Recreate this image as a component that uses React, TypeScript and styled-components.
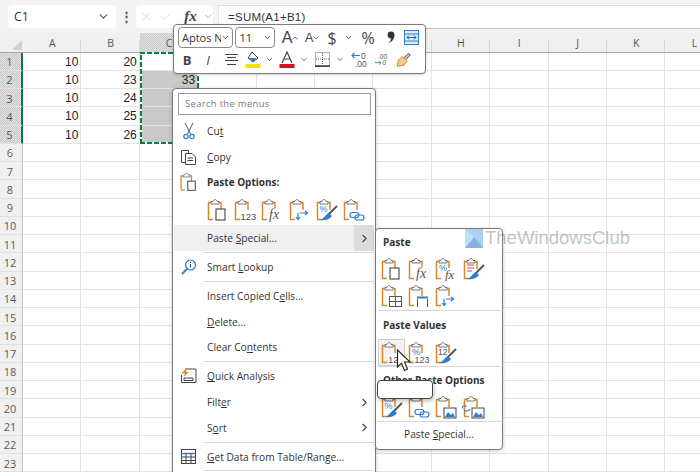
import React from "react";
import styled, { createGlobalStyle } from "styled-components";
import { ChevronDown, ChevronRight, X, Check } from "lucide-react";

const Global = createGlobalStyle`
  html, body { margin: 0; padding: 0; width: 700px; height: 472px; overflow: hidden; background: #fff; }
  #root { width: 700px; height: 472px; overflow: hidden; }
  * { box-sizing: border-box; }
`;

const UI = `"Open Sans", "Noto Sans", sans-serif`;
const hatch = `repeating-conic-gradient(#c9c9c9 0 25%, #e2e2e2 0 50%) 0 0/2px 2px`;

const Page = styled.div`
  position: relative;
  width: 700px;
  height: 472px;
  overflow: hidden;
  background: #fff;
  font-family: ${UI};
`;

const FormulaBar = styled.div`
  display: flex;
  align-items: flex-start;
  height: 33px;
  padding-top: 5px;
  background: #f3f3f3;
`;
const NameBox = styled.div`
  display: flex;
  align-items: center;
  justify-content: space-between;
  width: 108px;
  height: 23px;
  margin-left: 8px;
  padding: 0 6px;
  background: #fff;
  border-radius: 4px;
  font-size: 12.5px;
  color: #333;
`;
const Dots = styled.div`
  width: 20px;
  text-align: center;
  font: bold 13px/23px ${UI};
  color: #555;
`;
const FxBox = styled.div`
  display: flex;
  align-items: center;
  gap: 6px;
  width: 77px;
  height: 23px;
  padding-left: 3px;
  background: #fff;
  border-radius: 4px;
  color: #c8c8c8;
`;
const FxText = styled.span`
  margin-left: 5px;
  font: italic bold 15px "Liberation Serif", serif;
  color: #444;
`;
const FormulaInput = styled.div`
  flex: 1;
  height: 24px;
  margin-left: 5px;
  padding: 0 9px;
  background: #fff;
  border-top: 1px solid #dcdcdc;
  border-left: 1px solid #e4e4e4;
  border-bottom: 1px solid #bdbdbd;
  font: 11.5px/22px "Liberation Sans", sans-serif;
  letter-spacing: 0.25px;
  color: #333;
`;

const Sheet = styled.div`
  display: grid;
  grid-template-columns: 23px repeat(12, 58.4px);
  grid-template-rows: 19.5px repeat(24, 18.25px);
`;
const Corner = styled.div`
  position: relative;
  background: #f0f0f0;
  border-bottom: 1px solid #a6a6a6;
  &::after {
    content: "";
    position: absolute;
    right: 1px;
    bottom: 2px;
    border-style: solid;
    border-width: 0 0 10px 10px;
    border-color: transparent transparent #d2d2d2 transparent;
  }
`;
const ColHead = styled.div<{ $sel?: boolean }>`
  position: relative;
  display: flex;
  justify-content: center;
  align-items: center;
  padding-top: 2px;
  background: ${(p) => (p.$sel ? hatch : "#f0f0f0")};
  border-bottom: 1px solid #a6a6a6;
  font-size: 10.5px;
  color: #555;
  &::after {
    content: "";
    position: absolute;
    right: 0;
    bottom: 0;
    width: 1px;
    height: 12px;
    background: #d6d6d6;
  }
`;
const RowHead = styled.div<{ $sel?: boolean }>`
  display: flex;
  justify-content: center;
  align-items: center;
  padding: 1px 2px 0 0;
  background: ${(p) => (p.$sel ? hatch : "#f0f0f0")};
  border-bottom: 1px solid #e0e0e0;
  border-right: ${(p) => (p.$sel ? "2px solid #107c41" : "1px solid #c6c6c6")};
  font-size: 11px;
  color: ${(p) => (p.$sel ? "#2f6b55" : "#5b5b5b")};
`;
const Cell = styled.div<{ $fill?: boolean }>`
  display: flex;
  align-items: center;
  justify-content: flex-end;
  padding: 1px 2px 0 0;
  background: ${(p) => (p.$fill ? "#c9c9c9" : "#fff")};
  border-right: 1px solid #e4e4e4;
  border-bottom: 1px solid #e4e4e4;
  font: 12px "Liberation Sans", sans-serif;
  color: #222;
`;

const Ants = styled.div`
  position: absolute;
  left: 140px;
  top: 52px;
  width: 59px;
  height: 92px;
  background:
    repeating-linear-gradient(90deg, #107c41 0 5px, #fff 5px 7px) top / 100% 2px no-repeat,
    repeating-linear-gradient(90deg, #107c41 0 5px, #fff 5px 7px) bottom / 100% 2px no-repeat,
    repeating-linear-gradient(0deg, #107c41 0 5px, #fff 5px 7px) left / 2px 100% no-repeat,
    repeating-linear-gradient(0deg, #107c41 0 5px, #fff 5px 7px) right / 2px 100% no-repeat;
  pointer-events: none;
`;

const MiniBar = styled.div`
  position: absolute;
  left: 173px;
  top: 24px;
  width: 253px;
  height: 50px;
  padding: 2px 0 0 4px;
  background: #fff;
  border: 1px solid #7a7a7a;
  border-radius: 4px;
  box-shadow: 0 1px 3px rgba(0, 0, 0, 0.18);
`;
const ToolRow = styled.div`
  display: flex;
  align-items: center;
  height: 21px;
  & + & {
    margin-top: 1px;
  }
`;
const Select = styled.div<{ $w: number }>`
  display: flex;
  align-items: center;
  justify-content: space-between;
  width: ${(p) => p.$w}px;
  height: 21px;
  margin-right: 2px;
  padding: 0 2px 0 3px;
  border: 1px solid #8a8a8a;
  border-radius: 4px;
  font-size: 11px;
  color: #333;
  white-space: nowrap;
  overflow: hidden;
`;
const SelectText = styled.span`
  overflow: hidden;
  flex: 1;
`;
const Tool = styled.div<{ $w: number }>`
  display: flex;
  align-items: center;
  justify-content: center;
  flex: none;
  width: ${(p) => p.$w}px;
  height: 21px;
  color: #444;
`;
const GrowA = styled.span<{ $s: number }>`
  font: ${(p) => p.$s}px "Liberation Sans", sans-serif;
  color: #444;
`;
const ToolGlyph = styled.span<{ $b?: boolean; $i?: boolean; $s?: number; $c?: string }>`
  font-family: ${UI};
  font-size: ${(p) => p.$s ?? 13}px;
  font-weight: ${(p) => (p.$b ? 700 : 400)};
  font-style: ${(p) => (p.$i ? "italic" : "normal")};
  color: ${(p) => p.$c ?? "#444"};
`;

const Menu = styled.div`
  position: absolute;
  left: 172px;
  top: 88px;
  width: 204px;
  height: 400px;
  padding: 4px 1px 0;
  background: #fff;
  border: 1px solid #7a7a7a;
  border-radius: 4px;
  box-shadow: 0 1px 4px rgba(0, 0, 0, 0.2);
`;
const Search = styled.div`
  height: 22px;
  margin: 0 3px 3px 4px;
  padding-left: 6px;
  border: 1px solid #9a9a9a;
  font-size: 9.5px;
  line-height: 19px;
  letter-spacing: 0.3px;
  color: #7a7a7a;
`;
const Item = styled.div<{ $hover?: boolean }>`
  display: flex;
  align-items: center;
  height: 25.8px;
  background: ${(p) => (p.$hover ? "#f0f0f0" : "transparent")};
  font-size: 10.2px;
  color: #333;
  white-space: nowrap;
`;
const ItemIcon = styled.div`
  display: flex;
  align-items: center;
  justify-content: center;
  flex: none;
  width: 33px;
  padding-right: 4px;
`;
const ItemLabel = styled.div`
  flex: 1;
`;
const Heading = styled.div`
  flex: 1;
  font-weight: 700;
  font-size: 10px;
  color: #333;
`;
const Arrow = styled.div<{ $active?: boolean }>`
  display: flex;
  align-items: center;
  justify-content: center;
  width: 20px;
  height: 100%;
  background: ${(p) => (p.$active ? "#dcdcdc" : "transparent")};
  color: #444;
`;
const IconRow = styled.div<{ $pad: number; $h: number }>`
  display: flex;
  align-items: center;
  height: ${(p) => p.$h}px;
  padding-left: ${(p) => p.$pad}px;
`;
const IconCell = styled.div<{ $hover?: boolean }>`
  display: flex;
  align-items: center;
  justify-content: center;
  flex: none;
  width: 27.3px;
  height: 27px;
  background: ${(p) => (p.$hover ? "#f2f2f2" : "transparent")};
  outline: ${(p) => (p.$hover ? "1px solid #cfcfcf" : "none")};
  outline-offset: -1px;
`;
const Sep = styled.div<{ $left: number; $gap?: number }>`
  height: 1px;
  margin: ${(p) => p.$gap ?? 0}px 0 ${(p) => p.$gap ?? 0}px ${(p) => p.$left}px;
  background: #d6d6d6;
`;

const Sub = styled.div`
  position: absolute;
  left: 375px;
  top: 228px;
  width: 128px;
  height: 222px;
  padding: 3px 1px 0;
  background: #fff;
  border: 1px solid #7a7a7a;
  border-radius: 4px;
  box-shadow: 0 1px 4px rgba(0, 0, 0, 0.2);
`;
const SubHead = styled.div<{ $h: number; $pb?: number }>`
  display: flex;
  align-items: center;
  height: ${(p) => p.$h}px;
  padding: 0 0 ${(p) => p.$pb ?? 0}px 6px;
  font-weight: 700;
  font-size: 10px;
  color: #333;
  white-space: nowrap;
`;
const SubFoot = styled.div`
  height: 26px;
  font-size: 10.2px;
  line-height: 25px;
  text-align: center;
  color: #333;
`;
const Tip = styled.div`
  position: absolute;
  left: 377px;
  top: 380px;
  width: 56px;
  height: 19px;
  background: #fff;
  border: 1px solid #444;
  border-radius: 4px;
  box-shadow: 1px 2px 4px rgba(0, 0, 0, 0.25);
`;
const Cursor = styled.svg`
  position: absolute;
  left: 396px;
  top: 349px;
`;
const Watermark = styled.div`
  position: absolute;
  left: 465px;
  top: 227px;
  display: flex;
  align-items: center;
  gap: 2px;
  font: 18.5px "Liberation Sans", sans-serif;
  color: rgba(95, 110, 125, 0.42);
  pointer-events: none;
`;

/* ---------- drawings ---------- */
const OR = "#d9872a";
const BL = "#2b7cd3";
const GR = "#666";

type V =
  | "page" | "n123" | "fx" | "transpose" | "brushPct" | "link" | "pctFx" | "brushLines"
  | "table" | "width" | "n12" | "pct123" | "brush12" | "pic" | "linkPic";

const Brush = () => (
  <g>
    <path d="M22 8 L13 17" stroke="#555" strokeWidth="2" />
    <path d="M14 15 L17 18 C14 22 9 23 5 22 C9 21 10 17 14 15Z" fill={BL} />
  </g>
);
const LinkMark = () => (
  <g fill="none" stroke={BL} strokeWidth="1.2">
    <rect x="8" y="14.5" width="9" height="5" rx="2.5" />
    <rect x="13" y="17" width="9" height="5" rx="2.5" />
  </g>
);
const PicMark = () => (
  <g>
    <rect x="10" y="13" width="12" height="10" fill="#fff" stroke="#444" />
    <path d="M11 22 L14 17 L17 20 L19 18 L21 22Z" fill={BL} />
  </g>
);
const Board = () => (
  <g fill="none">
    <path d="M7 21.5H2.5V4.5H15V12" stroke={OR} strokeWidth="1.5" />
    <path d="M5 6V3.5H7C7 1 11 1 11 3.5H13V6Z" fill="#fff" stroke={GR} strokeWidth="0.9" />
  </g>
);
const Small = styled.text<{ $s: number; $c?: string; $i?: boolean }>`
  font-family: ${(p) => (p.$i ? `"Liberation Serif", serif` : `"Liberation Sans", sans-serif`)};
  font-style: ${(p) => (p.$i ? "italic" : "normal")};
  font-size: ${(p) => p.$s}px;
  fill: ${(p) => p.$c ?? "#555"};
`;

const Clip = ({ v }: { v: V }) => (
  <svg width="24" height="24" viewBox="0 0 24 24">
    <Board />
    {v === "page" && <rect x="10" y="11" width="9" height="11" fill="#fff" stroke="#444" strokeWidth="1.1" />}
    {v === "n123" && (
      <g>
        <rect x="7" y="13" width="16" height="10" fill="#fff" />
        <Small x="7.5" y="22" $s={9.5}>123</Small>
      </g>
    )}
    {v === "n12" && (
      <g>
        <rect x="8" y="13" width="11" height="10" fill="#fff" />
        <Small x="8" y="22" $s={9.5}>12</Small>
      </g>
    )}
    {v === "fx" && (
      <g>
        <rect x="8" y="10" width="14" height="13" fill="#fff" />
        <Small x="9" y="21" $s={14} $i>fx</Small>
      </g>
    )}
    {v === "pctFx" && (
      <g>
        <rect x="9" y="11" width="14" height="12" fill="#fff" />
        <Small x="5" y="14" $s={9} $c={BL}>%</Small>
        <Small x="11" y="22" $s={13} $i>fx</Small>
      </g>
    )}
    {v === "transpose" && (
      <g fill="none" stroke={BL} strokeWidth="1.2">
        <rect x="8" y="12" width="15" height="11" fill="#fff" stroke="none" />
        <path d="M10 15V21M8 19L10 21.5L12 19M12 15H19M17 13L19.5 15L17 17" />
      </g>
    )}
    {v === "brushPct" && (
      <g>
        <Small x="4.5" y="14" $s={9} $c={BL}>%</Small>
        <Brush />
      </g>
    )}
    {v === "brushLines" && (
      <g>
        <path d="M5 8H12M5 11H12M5 14H10" stroke="#d0453a" strokeWidth="1" />
        <Brush />
      </g>
    )}
    {v === "brush12" && (
      <g>
        <Small x="4" y="14" $s={8.5}>12</Small>
        <Brush />
      </g>
    )}
    {v === "link" && (
      <g>
        <rect x="7" y="13" width="16" height="10" fill="#fff" />
        <LinkMark />
      </g>
    )}
    {v === "table" && (
      <g fill="#fff" stroke="#555" strokeWidth="1">
        <rect x="9.5" y="12.5" width="12" height="10" />
        <path d="M15.5 12.5V22.5M9.5 17.5H21.5" fill="none" />
      </g>
    )}
    {v === "width" && (
      <g>
        <rect x="9" y="12" width="14" height="11" fill="#fff" />
        <path d="M10.5 23V15M20.5 23V15" stroke="#555" />
        <path d="M10 13.5H21" stroke={BL} strokeWidth="2" />
      </g>
    )}
    {v === "pct123" && (
      <g>
        <rect x="7" y="14" width="16" height="9" fill="#fff" />
        <Small x="5" y="14" $s={9.5} $c={BL}>%</Small>
        <Small x="7.5" y="22" $s={9}>123</Small>
      </g>
    )}
    {v === "pic" && <PicMark />}
    {v === "linkPic" && (
      <g>
        <PicMark />
        <path d="M1 13.5C-1 11 3 10 4.5 11.5M2 15C4 17 7 16 8 14" fill="none" stroke={BL} strokeWidth="1.1" />
      </g>
    )}
  </svg>
);

const CutIcon = () => (
  <svg width="18" height="18" viewBox="0 0 18 18" fill="none">
    <path d="M5 1L10.5 12M13 1L7.5 12" stroke="#555" strokeWidth="1" />
    <circle cx="6" cy="14.5" r="2.2" stroke={BL} strokeWidth="1.2" />
    <circle cx="12" cy="14.5" r="2.2" stroke={BL} strokeWidth="1.2" />
  </svg>
);
const CopyIcon = () => (
  <svg width="18" height="18" viewBox="0 0 18 18" fill="none" stroke="#444" strokeWidth="1">
    <path d="M5 14.5H1.5V2.5H8.5V5" />
    <path d="M5.5 5.5H12L15.5 9V16.5H5.5Z" fill="#fff" />
    <path d="M7.5 10H13M7.5 12.5H13" />
  </svg>
);
const PasteIcon = () => (
  <svg width="20" height="20" viewBox="0 0 24 24">
    <Board />
    <rect x="10.5" y="11" width="9" height="11" fill="#fff" stroke="#444" strokeWidth="1.2" />
  </svg>
);
const LookupIcon = () => (
  <svg width="18" height="18" viewBox="0 0 18 18" fill="none" stroke={BL}>
    <circle cx="10.5" cy="7" r="5" strokeWidth="1.2" />
    <path d="M7 11L2 16" strokeWidth="1.8" />
    <path d="M10.5 6V9.5M10.5 4V5" stroke="#333" strokeWidth="1" />
  </svg>
);
const QuickIcon = () => (
  <svg width="18" height="18" viewBox="0 0 18 18" fill="none">
    <path d="M5 2H16V15.5H1.5V8" stroke="#444" />
    <path d="M4 11H13V13.5H4Z" stroke="#444" fill="#fff" />
    <path d="M6.5 1L1.5 6.5H5L3.5 10L9 5H6Z" fill="#e8832a" />
  </svg>
);
const TableIcon = () => (
  <svg width="17" height="17" viewBox="0 0 17 17" fill="none" stroke="#444">
    <rect x="1.5" y="1.5" width="14" height="14" />
    <path d="M1.5 5.5H15.5" stroke={BL} strokeWidth="1.4" />
    <path d="M1.5 9H15.5M1.5 12.5H15.5M6 5.5V15.5M11 5.5V15.5" />
  </svg>
);
const AlignIcon = () => (
  <svg width="15" height="13" viewBox="0 0 15 13" stroke="#444">
    <path d="M1 1.5H14M3 4.5H12M1 7.5H14M3 11.5H12" />
  </svg>
);
const FillIcon = () => (
  <svg width="16" height="17" viewBox="0 0 16 17">
    <path d="M7 1L13 7L8 11L3 7Z" fill="#fff" stroke="#444" />
    <path d="M3.5 7H12L8 10.5Z" fill={BL} />
    <rect x="0.5" y="13" width="15" height="4" fill="#f6e100" />
  </svg>
);
const ColorA = () => (
  <svg width="16" height="17" viewBox="0 0 16 17">
    <path d="M3 12L8 1L13 12M5 8H11" fill="none" stroke="#444" strokeWidth="1.2" />
    <rect x="0.5" y="13" width="15" height="4" fill="#d6121f" />
  </svg>
);
const BordersIcon = () => (
  <svg width="15" height="15" viewBox="0 0 15 15" fill="none" stroke="#666" strokeDasharray="1 1">
    <rect x="0.5" y="0.5" width="14" height="13" />
    <path d="M7.5 1V13M1 7H14" />
    <path d="M0 14.2H15" stroke="#222" strokeDasharray="none" strokeWidth="1.3" />
  </svg>
);
const WrapIcon = () => (
  <svg width="15" height="15" viewBox="0 0 15 15" fill="#dcebf7" stroke={BL}>
    <rect x="0.5" y="0.5" width="14" height="14" />
    <path d="M1 4H14M1 11H14" fill="none" />
    <path d="M3 7.5H12M5 5.5L3 7.5L5 9.5M10 5.5L12 7.5L10 9.5" fill="none" stroke="#1e6aa8" />
  </svg>
);
const CommaIcon = () => (
  <svg width="9" height="13" viewBox="0 0 9 13">
    <circle cx="5" cy="4" r="3.4" fill="#333" />
    <path d="M8.4 4C8.4 8 6 11 2 12.5C4.5 10.5 5.5 8 5 6Z" fill="#333" />
  </svg>
);
const DecInc = () => (
  <svg width="18" height="17" viewBox="0 0 18 17">
    <path d="M10 4.5H2M4.5 2L2 4.5L4.5 7" fill="none" stroke={BL} strokeWidth="1.1" />
    <Small x="11" y="8" $s={8.5}>0</Small>
    <Small x="5" y="16" $s={8.5}>.00</Small>
  </svg>
);
const DecDec = () => (
  <svg width="18" height="17" viewBox="0 0 18 17">
    <Small x="5" y="8" $s={8.5}>.00</Small>
    <path d="M1 12.5H9M6.5 10L9 12.5L6.5 15" fill="none" stroke={BL} strokeWidth="1.1" />
    <Small x="11" y="16" $s={8.5}>0</Small>
  </svg>
);
const PainterIcon = () => (
  <svg width="17" height="17" viewBox="0 0 17 17" fill="none">
    <path d="M9 7L13.5 2.5L15 4L10.5 8.5" stroke="#777" strokeWidth="1.2" />
    <path d="M7 5.5L12 10.5L9 14L2 15.5L3.5 9Z" fill="#f7c98d" stroke="#d9872a" />
  </svg>
);

const Grow = ({ up }: { up?: boolean }) => (
  <svg width="6" height="4" viewBox="0 0 6 4" fill="none" stroke={BL}>
    <path d={up ? "M0.5 3.5L3 1L5.5 3.5" : "M0.5 0.5L3 3L5.5 0.5"} />
  </svg>
);
const Tiny = () => <ChevronDown size={9} strokeWidth={2.4} color="#444" />;

const Wm = () => (
  <svg width="18" height="19" viewBox="0 0 18 19">
    <rect width="18" height="19" fill="#a9d1f2" />
    <path d="M0 19L9 8L18 19Z" fill="#8ab1dc" />
    <path d="M0 0L9 8L0 19Z" fill="#bfe0f7" />
  </svg>
);

/* ---------- data ---------- */
const COLS = "ABCDEFGHIJKL".split("");
const ROWS = Array.from({ length: 24 }, (_, i) => i + 1);
const DATA: Record<number, [number, number]> = {
  1: [10, 20], 2: [10, 23], 3: [10, 24], 4: [10, 25], 5: [10, 26],
};
const PASTE_OPTIONS: V[] = ["page", "n123", "fx", "transpose", "brushPct", "link"];

export default function App() {
  return (
    <Page>
      <Global />
      <FormulaBar>
        <NameBox>
          C1
          <ChevronDown size={13} color="#555" />
        </NameBox>
        <Dots>⋮</Dots>
        <FxBox>
          <X size={15} strokeWidth={1.2} />
          <Check size={15} strokeWidth={1.2} />
          <FxText>fx</FxText>
          <ChevronDown size={11} color="#aaa" />
        </FxBox>
        <FormulaInput>=SUM(A1+B1)</FormulaInput>
      </FormulaBar>

      <Sheet>
        <Corner />
        {COLS.map((c) => (
          <ColHead key={c} $sel={c === "C"}>{c}</ColHead>
        ))}
        {ROWS.map((r) => (
          <React.Fragment key={r}>
            <RowHead $sel={r <= 5}>{r < 24 ? r : ""}</RowHead>
            {COLS.map((c, i) => (
              <Cell key={c} $fill={c === "C" && r >= 2 && r <= 5}>
                {i < 2 && DATA[r] ? DATA[r][i] : c === "C" && r === 2 ? 33 : ""}
              </Cell>
            ))}
          </React.Fragment>
        ))}
      </Sheet>
      <Ants />

      <MiniBar>
        <ToolRow>
          <Select $w={56}>
            <SelectText>Aptos Narrow</SelectText>
            <Tiny />
          </Select>
          <Select $w={40}>
            <SelectText>11</SelectText>
            <Tiny />
          </Select>
          <Tool $w={26}><GrowA $s={16}>A</GrowA><Grow up /></Tool>
          <Tool $w={18}><GrowA $s={13}>A</GrowA><Grow /></Tool>
          <Tool $w={22}><ToolGlyph $s={16}>$</ToolGlyph></Tool>
          <Tool $w={10}><Tiny /></Tool>
          <Tool $w={30}><ToolGlyph $s={16}>%</ToolGlyph></Tool>
          <Tool $w={14}><CommaIcon /></Tool>
          <Tool $w={28}><WrapIcon /></Tool>
        </ToolRow>
        <ToolRow>
          <Tool $w={18}><ToolGlyph $b $s={13}>B</ToolGlyph></Tool>
          <Tool $w={24}><ToolGlyph $i $s={13}>I</ToolGlyph></Tool>
          <Tool $w={22}><AlignIcon /></Tool>
          <Tool $w={22}><FillIcon /></Tool>
          <Tool $w={10}><Tiny /></Tool>
          <Tool $w={26}><ColorA /></Tool>
          <Tool $w={8}><Tiny /></Tool>
          <Tool $w={28}><BordersIcon /></Tool>
          <Tool $w={8}><Tiny /></Tool>
          <Tool $w={30}><DecInc /></Tool>
          <Tool $w={14}><DecDec /></Tool>
          <Tool $w={30}><PainterIcon /></Tool>
        </ToolRow>
      </MiniBar>

      <Menu>
        <Search>Search the menus</Search>
        <Item>
          <ItemIcon><CutIcon /></ItemIcon>
          <ItemLabel>Cu<u>t</u></ItemLabel>
        </Item>
        <Item>
          <ItemIcon><CopyIcon /></ItemIcon>
          <ItemLabel><u>C</u>opy</ItemLabel>
        </Item>
        <Item>
          <ItemIcon><PasteIcon /></ItemIcon>
          <Heading>Paste Options:</Heading>
        </Item>
        <IconRow $pad={30} $h={30}>
          {PASTE_OPTIONS.map((v) => (
            <IconCell key={v}><Clip v={v} /></IconCell>
          ))}
        </IconRow>
        <Item $hover>
          <ItemIcon />
          <ItemLabel>Paste <u>S</u>pecial...</ItemLabel>
          <Arrow $active><ChevronRight size={13} /></Arrow>
        </Item>
        <Sep $left={30} $gap={1} />
        <Item>
          <ItemIcon><LookupIcon /></ItemIcon>
          <ItemLabel>Smart <u>L</u>ookup</ItemLabel>
        </Item>
        <Sep $left={30} $gap={1} />
        <Item>
          <ItemIcon />
          <ItemLabel>Insert Copied C<u>e</u>lls...</ItemLabel>
        </Item>
        <Item>
          <ItemIcon />
          <ItemLabel><u>D</u>elete...</ItemLabel>
        </Item>
        <Item>
          <ItemIcon />
          <ItemLabel>Clear Co<u>n</u>tents</ItemLabel>
        </Item>
        <Sep $left={30} $gap={1} />
        <Item>
          <ItemIcon><QuickIcon /></ItemIcon>
          <ItemLabel><u>Q</u>uick Analysis</ItemLabel>
        </Item>
        <Item>
          <ItemIcon />
          <ItemLabel>Filt<u>e</u>r</ItemLabel>
          <Arrow><ChevronRight size={13} /></Arrow>
        </Item>
        <Item>
          <ItemIcon />
          <ItemLabel>S<u>o</u>rt</ItemLabel>
          <Arrow><ChevronRight size={13} /></Arrow>
        </Item>
        <Sep $left={30} $gap={1} />
        <Item>
          <ItemIcon><TableIcon /></ItemIcon>
          <ItemLabel><u>G</u>et Data from Table/Range...</ItemLabel>
        </Item>
        <Sep $left={30} />
      </Menu>

      <Sub>
        <SubHead $h={23} $pb={3}>Paste</SubHead>
        <IconRow $pad={1} $h={27.5}>
          {(["page", "fx", "pctFx", "brushLines"] as V[]).map((v) => (
            <IconCell key={v}><Clip v={v} /></IconCell>
          ))}
        </IconRow>
        <IconRow $pad={1} $h={27.5}>
          {(["table", "width", "transpose"] as V[]).map((v) => (
            <IconCell key={v}><Clip v={v} /></IconCell>
          ))}
        </IconRow>
        <Sep $left={1} />
        <SubHead $h={28}>Paste Values</SubHead>
        <IconRow $pad={1} $h={27}>
          <IconCell $hover><Clip v="n12" /></IconCell>
          <IconCell><Clip v="pct123" /></IconCell>
          <IconCell><Clip v="brush12" /></IconCell>
        </IconRow>
        <Sep $left={1} />
        <SubHead $h={26}>Other Paste Options</SubHead>
        <IconRow $pad={1} $h={28}>
          {(["brushPct", "link", "pic", "linkPic"] as V[]).map((v) => (
            <IconCell key={v}><Clip v={v} /></IconCell>
          ))}
        </IconRow>
        <Sep $left={1} />
        <SubFoot>Paste <u>S</u>pecial...</SubFoot>
      </Sub>

      <Tip />
      <Cursor width="16" height="24" viewBox="0 0 16 24">
        <path d="M1.5 1V18L5.5 14.2L8.5 21.5L11.5 20L8.5 13H14Z" fill="#fff" stroke="#222" strokeWidth="1.1" />
      </Cursor>

      <Watermark>
        <Wm />
        TheWindowsClub
      </Watermark>
    </Page>
  );
}
